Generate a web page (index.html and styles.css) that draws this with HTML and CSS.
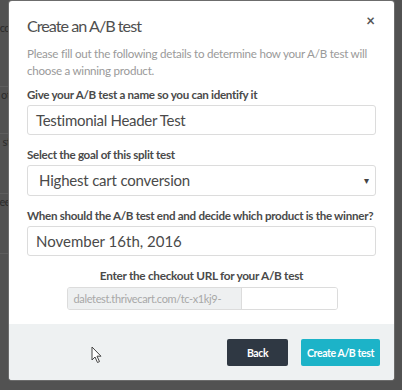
FILE: index.html
```html
<!DOCTYPE html>
<html>
<head>
<meta charset="utf-8">
<link rel="stylesheet" href="styles.css">
</head>
<body>
<div class="backdrop">
  <div class="bg-row r1"><span>co</span></div>
  <div class="bg-row r2"><span>ot</span></div>
  <div class="bg-row r3"><span>st</span></div>
  <div class="bg-row r4"><span>ee</span></div>
</div>
<div class="modal">
  <div class="modal-body">
    <div class="modal-head">
      <h1 class="title">Create an A/B test</h1>
      <span class="close">×</span>
    </div>
    <p class="desc">Please fill out the following details to determine how your A/B test will choose a winning product.</p>
    <div class="group">
      <label class="label">Give your A/B test a name so you can identify it</label>
      <div class="input">Testimonial Header Test</div>
    </div>
    <div class="group">
      <label class="label">Select the goal of this split test</label>
      <div class="input select"><span class="select-text">Highest cart conversion</span><span class="caret">▾</span></div>
    </div>
    <div class="group">
      <label class="label">When should the A/B test end and decide which product is the winner?</label>
      <div class="input date">November 16th, 2016</div>
    </div>
    <div class="group center">
      <label class="label url-label">Enter the checkout URL for your A/B test</label>
      <div class="url-group">
        <span class="addon">daletest.thrivecart.com/tc-x1kj9-</span>
        <span class="url-input"></span>
      </div>
    </div>
  </div>
  <div class="modal-foot">
    <button class="btn btn-back">Back</button>
    <button class="btn btn-create">Create A/B test</button>
  </div>
  <svg class="cursor" width="12" height="18" viewBox="0 0 12 18"><path d="M1 1 L1 14 L4 11 L6.5 16.5 L8.5 15.6 L6 10.2 L10 10.2 Z" fill="#fff" stroke="#444" stroke-width="1" stroke-linejoin="round"/></svg>
</div>
</body>
</html>
```

FILE: styles.css
```css
* { box-sizing: border-box; }
html, body { margin: 0; padding: 0; }
body {
  width: 402px;
  height: 390px;
  background: #525252;
  font-family: Lato, "Open Sans", sans-serif;
  position: relative;
  overflow: hidden;
}
.backdrop {
  display: flex;
  flex-direction: column;
  padding-top: 20px;
}
.bg-row {
  width: 10px;
  display: flex;
  justify-content: flex-end;
  align-items: flex-start;
  border-bottom: 1px solid #5e5e5e;
}
.bg-row span {
  white-space: nowrap;
  color: #2a2a2a;
  font-size: 11px;
  letter-spacing: -0.6px;
  line-height: 16px;
}
.r1 { height: 67px; }
.r2 { height: 47px; }
.r3 { height: 60px; }
.r4 { height: 60px; }
.modal {
  position: absolute;
  left: 9px;
  top: 1px;
  width: 385px;
  height: 379px;
  background: #fff;
  border-radius: 3px;
  display: flex;
  flex-direction: column;
  overflow: hidden;
  box-shadow: 0 0 0 1px #6c6c6c;
}
.modal-body {
  padding: 14px 18px 0 18px;
  flex: 1;
}
.modal-head {
  display: flex;
  justify-content: space-between;
  align-items: flex-start;
}
.title {
  margin: 0;
  font-size: 16.2px;
  font-weight: 400;
  letter-spacing: -1px;
  line-height: 22px;
  color: #4f4f4f;
}
.close {
  font-size: 15px;
  font-weight: 700;
  color: #555;
  line-height: 14px;
  margin-top: -2px;
  margin-right: 1px;
}
.desc {
  margin: 8px 0 0 0;
  font-size: 11.6px;
  letter-spacing: -0.25px;
  line-height: 17px;
  color: #9a9a9a;
}
.group {
  margin-top: 7px;
  display: flex;
  flex-direction: column;
}
.group + .group { margin-top: 11px; }
.label {
  font-size: 11.6px;
  font-weight: 700;
  letter-spacing: -0.3px;
  line-height: 17px;
  color: #4a4a4a;
  margin-bottom: 2px;
  white-space: nowrap;
}
.input {
  height: 30px;
  border: 1px solid #dcdcdc;
  border-radius: 3px;
  padding: 0 8px;
  font-size: 15px;
  letter-spacing: -0.3px;
  line-height: 28px;
  color: #4a4a4a;
  background: #fff;
}
.date { letter-spacing: 0; }
.select {
  height: 31px;
  line-height: 29px;
  display: flex;
  justify-content: space-between;
  padding: 0 6px 0 11px;
  letter-spacing: -0.2px;
}
.caret {
  font-size: 10px;
  color: #444;
}
.center { align-items: center; }
.url-label {
  font-size: 11.8px;
  letter-spacing: -0.3px;
  margin-bottom: 3px;
}
.url-group {
  display: flex;
  width: 271px;
  height: 23px;
  border: 1px solid #dcdcdc;
  border-radius: 3px;
  overflow: hidden;
  margin-left: 1px;
}
.addon {
  background: #eef0f1;
  color: #a8a8a8;
  font-size: 11px;
  letter-spacing: -0.35px;
  line-height: 21px;
  padding: 0 6px;
  width: 174px;
  border-right: 1px solid #dcdcdc;
  white-space: nowrap;
  overflow: hidden;
}
.url-input { flex: 1; background: #fff; }
.modal-foot {
  height: 56px;
  background: #eef1f2;
  display: flex;
  justify-content: flex-end;
  align-items: center;
  gap: 13px;
  padding: 1px 14px 0 0;
}
.btn {
  height: 27px;
  border: none;
  border-radius: 2px;
  font-family: Lato, "Open Sans", sans-serif;
  font-weight: 700;
  font-size: 10.5px;
  letter-spacing: -0.4px;
  color: #fff;
  padding: 0;
  white-space: nowrap;
}
.btn-back { width: 61px; background: #2f3843; }
.btn-create { width: 79px; background: #1cb3c8; }
.cursor {
  position: absolute;
  left: 82px;
  top: 345px;
}
```
